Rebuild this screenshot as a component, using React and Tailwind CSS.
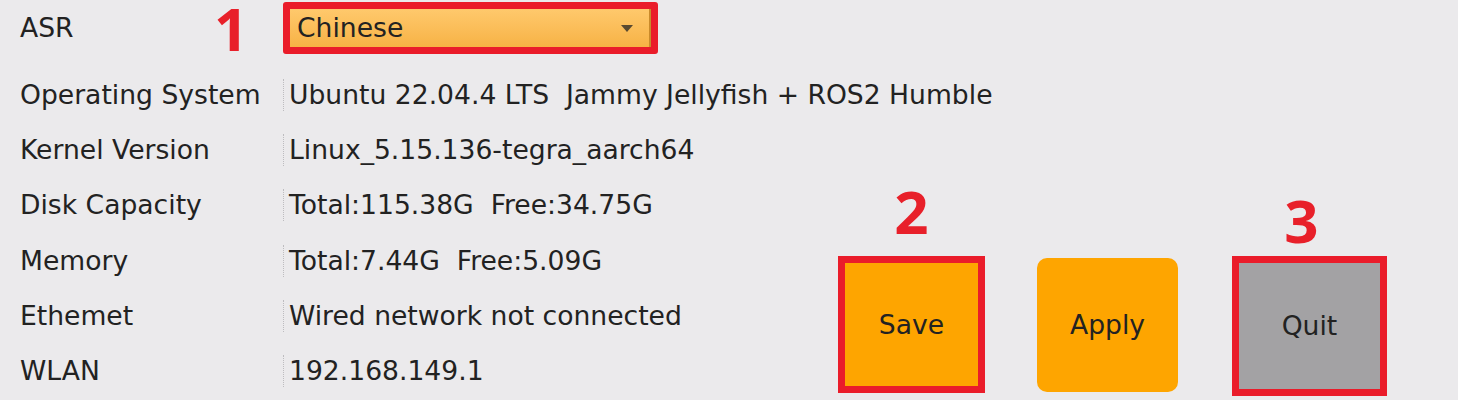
import React from "react";

const rows = [
  { label: "Operating System", value: "Ubuntu 22.04.4 LTS  Jammy Jellyfish + ROS2 Humble" },
  { label: "Kernel Version", value: "Linux_5.15.136-tegra_aarch64" },
  { label: "Disk Capacity", value: "Total:115.38G  Free:34.75G" },
  { label: "Memory", value: "Total:7.44G  Free:5.09G" },
  { label: "Ethemet", value: "Wired network not connected" },
  { label: "WLAN", value: "192.168.149.1" },
];

function Badge({ children, className = "" }) {
  return (
    <span className={"block font-['Noto_Sans',sans-serif] font-bold text-[60px] text-[#e8202a] " + className}>
      {children}
    </span>
  );
}

export default function App() {
  return (
    <div className="w-[1458px] h-[400px] overflow-hidden bg-[#ebeaec] font-['DejaVu_Sans',sans-serif] text-[26.6px] text-[#222] flex">
      {/* Settings list */}
      <div className="w-[838px] shrink-0 pl-[20px] pt-[2px]">
        <div className="flex items-center h-[52px]">
          <div className="w-[263px] h-[52px] shrink-0 flex items-center">
            <span className="w-[194px]">ASR</span>
            <Badge className="leading-[52px]">1</Badge>
          </div>
          <div className="w-[375px] h-[52px] border-[7px] border-[#ea1c2a] rounded-[3px]">
            <div className="h-full flex items-center justify-between pl-[7px] pr-[16px] bg-gradient-to-b from-[#ffc96c] to-[#f7b244] border-r-2 border-[#c98a2a]">
              <span>Chinese</span>
              <svg width="12" height="7" viewBox="0 0 12 7">
                <path d="M0 0h12L6 7z" fill="#5a4a30" />
              </svg>
            </div>
          </div>
        </div>

        <div className="mt-[13px]">
          {rows.map((r) => (
            <div key={r.label} className="flex items-center h-[55.3px]">
              <div className="w-[263px] shrink-0 whitespace-nowrap">{r.label}</div>
              <div className="h-[32px] flex items-center border-l-[1.5px] border-dotted border-[#bdbcbf] pl-[5px] whitespace-pre">
                {r.value}
              </div>
            </div>
          ))}
        </div>
      </div>

      {/* Action buttons */}
      <div className="flex items-end pb-[7px]">
        <div className="flex flex-col items-center">
          <Badge className="leading-[84px]">2</Badge>
          <button className="mt-[3px] w-[147px] h-[137px] border-[7px] border-[#ea1c2a] bg-[#fea500]">
            Save
          </button>
        </div>
        <button className="ml-[52px] mb-[1px] w-[141px] h-[134px] rounded-[10px] bg-[#fea500]">
          Apply
        </button>
        <div className="ml-[54px] flex flex-col items-center">
          <Badge className="leading-[84px] pr-[16px]">3</Badge>
          <button className="-mt-[6px] w-[155px] h-[140px] border-[7px] border-[#ea1c2a] bg-[#a3a2a4] -mb-[3px]">
            Quit
          </button>
        </div>
      </div>
    </div>
  );
}
